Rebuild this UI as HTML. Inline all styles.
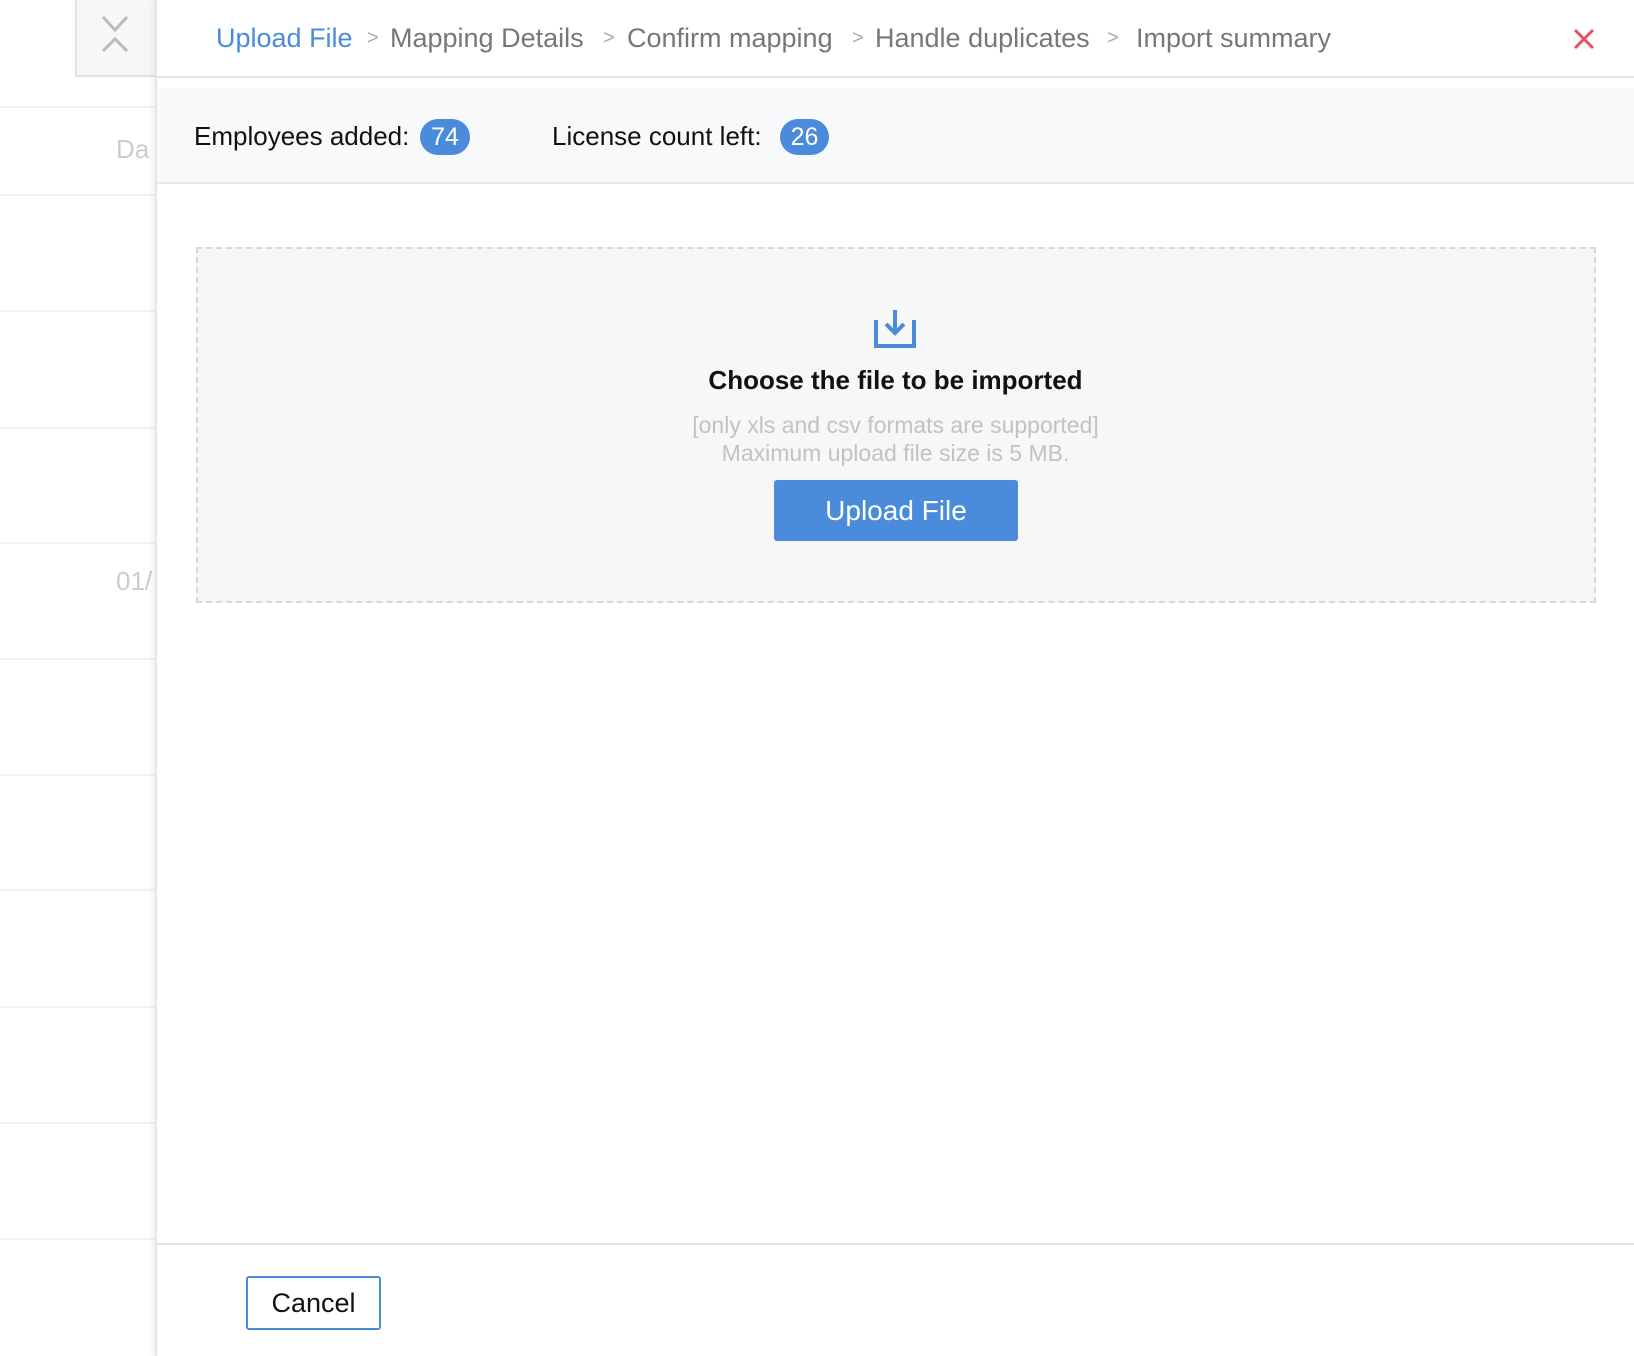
<!DOCTYPE html>
<html><head><meta charset="utf-8"><style>
*{margin:0;padding:0;box-sizing:border-box}
body{width:1634px;height:1356px;overflow:hidden;background:#fff;font-family:"Liberation Sans",sans-serif;position:relative}
.row{position:absolute;left:0;width:155px;height:2px;background:#f3f3f3}
.abs{position:absolute}
.panel{position:absolute;left:155px;top:0;width:1479px;height:1356px;background:#fff;box-shadow:-3px 0 6px rgba(0,0,0,0.06);border-left:2px solid #e6e6e6}
.crumb{position:absolute;top:23px;font-size:27px;color:#777;white-space:nowrap}
.sep{position:absolute;top:27px;font-size:20px;color:#aaa}
.badge{position:absolute;top:119px;height:36px;border-radius:18px;background:#4a8cdb;color:#fff;font-size:25px;text-align:center;line-height:36px}
</style></head><body>
<div class="row" style="top:106px"></div>
<div class="row" style="top:194px"></div>
<div class="row" style="top:310px"></div>
<div class="row" style="top:427px"></div>
<div class="row" style="top:542px"></div>
<div class="row" style="top:658px"></div>
<div class="row" style="top:774px"></div>
<div class="row" style="top:889px"></div>
<div class="row" style="top:1006px"></div>
<div class="row" style="top:1122px"></div>
<div class="row" style="top:1238px"></div>
<div class="abs" style="left:116px;top:134px;font-size:26px;color:#ccc">Da</div>
<div class="abs" style="left:116px;top:566px;font-size:26px;color:#ccc">01/</div>
<div class="abs" style="left:75px;top:0;width:82px;height:77px;background:#f7f7f7;border-left:2px solid #e3e3e3;border-bottom:2px solid #e3e3e3">
<svg width="82" height="77" viewBox="0 0 82 77"><path d="M26 17 L38 30 L50 17 M26 51 L38 39 L50 51" fill="none" stroke="#bbb" stroke-width="3"/></svg>
</div>
<div class="panel">
 <div class="abs" style="left:0;top:76px;width:1479px;height:2px;background:#e3e3e3"></div>
 <div class="crumb" style="left:59px;color:#4a8cdb">Upload File</div>
 <div class="sep" style="left:210px">&gt;</div>
 <div class="crumb" style="left:233px">Mapping Details</div>
 <div class="sep" style="left:446px">&gt;</div>
 <div class="crumb" style="left:470px">Confirm mapping</div>
 <div class="sep" style="left:695px">&gt;</div>
 <div class="crumb" style="left:718px">Handle duplicates</div>
 <div class="sep" style="left:950px">&gt;</div>
 <div class="crumb" style="left:979px">Import summary</div>
 <svg class="abs" style="left:1416px;top:28px" width="22" height="22" viewBox="0 0 22 22"><path d="M2 2L20 20M20 2L2 20" stroke="#e8505b" stroke-width="3"/></svg>
 <div class="abs" style="left:0;top:88px;width:1479px;height:96px;background:#f8f9fa;border-bottom:2px solid #e8e8e8"></div>
 <div class="abs" style="left:37px;top:121px;font-size:26px;color:#111">Employees added:</div>
 <div class="badge" style="left:263px;width:50px">74</div>
 <div class="abs" style="left:395px;top:121px;font-size:26px;color:#111">License count left:</div>
 <div class="badge" style="left:623px;width:49px">26</div>
 <div class="abs" style="left:39px;top:247px;width:1400px;height:356px;background:#f7f7f7;border:2px dashed #d8d8d8"></div>
 <svg class="abs" style="left:717px;top:308px" width="42" height="42" viewBox="0 0 42 42"><path d="M2 12V38H40V12" fill="none" stroke="#4a8cdb" stroke-width="4"/><path d="M21 2V25M12 16L21 25L30 16" fill="none" stroke="#4a8cdb" stroke-width="4"/></svg>
 <div class="abs" style="left:0;width:1477px;top:365px;text-align:center;font-size:26px;font-weight:bold;color:#111">Choose the file to be imported</div>
 <div class="abs" style="left:0;width:1477px;top:411px;text-align:center;font-size:23px;line-height:28px;color:#c2c2c2">[only xls and csv formats are supported]<br>Maximum upload file size is 5 MB.</div>
 <div class="abs" style="left:617px;top:480px;width:244px;height:61px;background:#4a8cdb;border-radius:3px;color:#fff;font-size:28px;text-align:center;line-height:61px">Upload File</div>
 <div class="abs" style="left:0;top:1243px;width:1479px;height:2px;background:#e3e3e3"></div>
 <div class="abs" style="left:89px;top:1276px;width:135px;height:54px;border:2px solid #4a8cdb;border-radius:3px;font-size:27px;color:#111;text-align:center;line-height:50px">Cancel</div>
</div>
</body></html>
